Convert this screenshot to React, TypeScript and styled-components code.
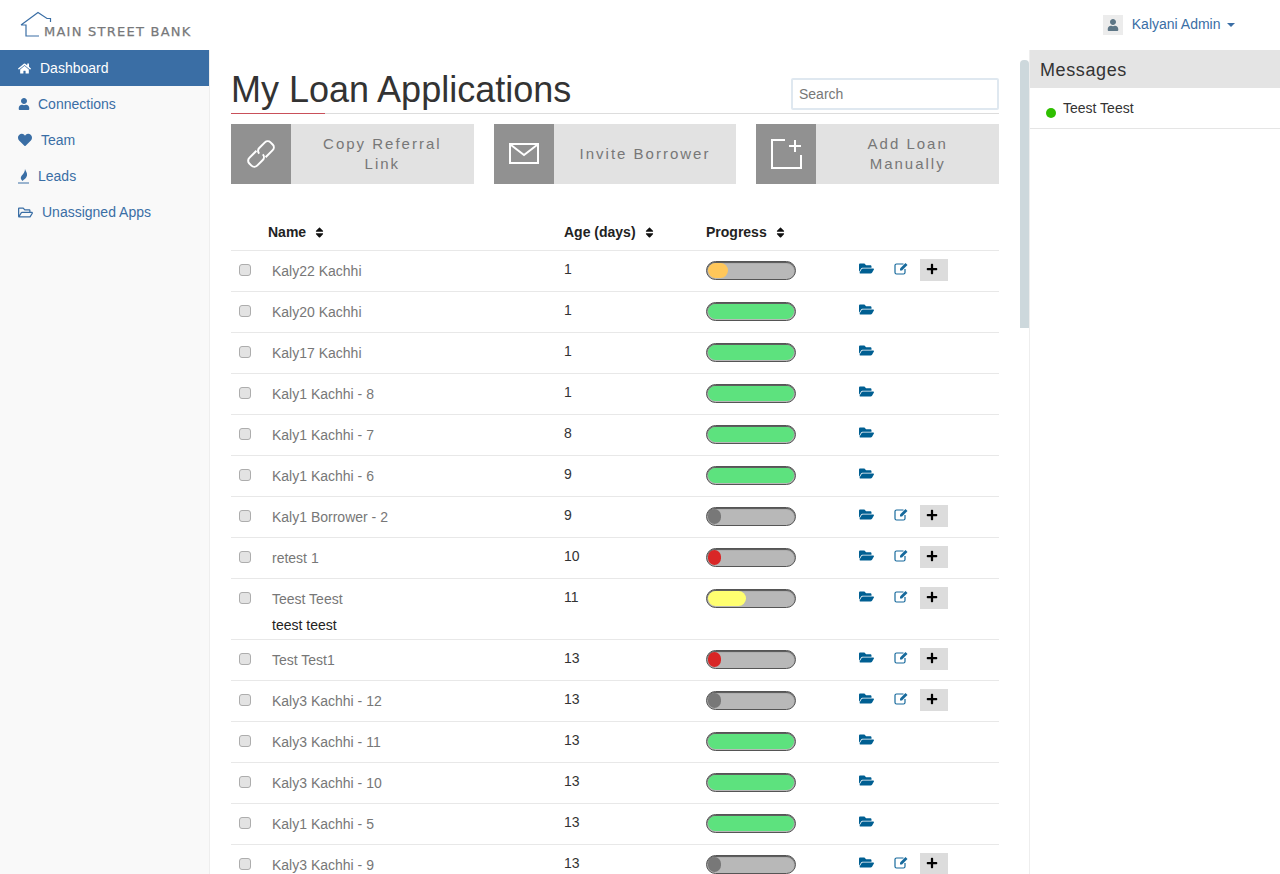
import React from "react";
import styled, { createGlobalStyle } from "styled-components";
import { FaHome, FaUser, FaHeart, FaRegFolderOpen, FaFolderOpen, FaPlus, FaSort } from "react-icons/fa";

const Global = createGlobalStyle`
  html, body { margin: 0; padding: 0; background: #fff; overflow: hidden; }
  body { font-family: "Liberation Sans", Arial, sans-serif; font-size: 14px; color: #333; }
  * { box-sizing: border-box; }
`;

const Page = styled.div`
  width: 1280px; height: 874px; overflow: hidden;
  display: flex; flex-direction: column;
`;
const TopBar = styled.header`
  height: 50px; flex: none; display: flex; align-items: flex-start; justify-content: space-between;
  padding-right: 45px;
`;
const Logo = styled.div`
  position: relative; width: 210px; height: 50px; padding: 22px 0 0 44px;
`;
const LogoMark = styled.svg`
  position: absolute; left: 19px; top: 11px;
`;
const LogoText = styled.span`
  font-family: "DejaVu Sans", sans-serif; font-size: 13px; font-weight: 400; letter-spacing: 1.25px;
  -webkit-text-stroke: 0.25px #77787a;
  line-height: 20px; color: #77787a; white-space: nowrap; display: block;
`;
const UserMenu = styled.div`
  display: flex; align-items: center; height: 20px; margin-top: 15px; color: #3a6ea5; font-size: 14px;
`;
const UserName = styled.span`
  margin-top: -2px;
`;
const Avatar = styled.span`
  width: 20px; height: 20px; background: #ececec; color: #5d7686; display: flex; align-items: center;
  justify-content: center; margin-right: 8.5px; font-size: 12px;
`;
const Caret = styled.span`
  width: 0; height: 0; margin-left: 6.5px; margin-top: -1px;
  border-left: 4px solid transparent; border-right: 4px solid transparent; border-top: 4px solid #3a6ea5;
`;
const Body = styled.div`
  flex: 1; display: flex; min-height: 0;
`;
const Sidebar = styled.nav`
  width: 210px; flex: none; background: #f9f9f9; border-right: 1px solid #eee;
`;
const NavItem = styled.a<{ $active?: boolean; $gap: number }>`
  display: flex; align-items: center; height: 36px; padding-left: 18px; gap: ${(p) => p.$gap}px;
  font-size: 14px; color: ${(p) => (p.$active ? "#fff" : "#3a6ea5")};
  background: ${(p) => (p.$active ? "#3a6ea5" : "transparent")};
  svg { flex: none; }
`;
const Main = styled.main`
  position: relative; flex: 1; min-width: 0; padding: 0 30px 0 21px;
`;
const ScrollThumb = styled.div`
  position: absolute; right: 0; top: 10px; width: 9px; height: 268px; background: #cdd8dc; border-radius: 4px 4px 0 0;
`;
const TitleRow = styled.div`
  display: flex; justify-content: space-between; align-items: flex-end; height: 64px; border-bottom: 1px solid #ddd; padding-bottom: 3px;
`;
const Title = styled.h1`
  position: relative; margin: 0; font-size: 36px; font-weight: 400; line-height: 40px; color: #333;
  &::after { content: ""; position: absolute; left: 0; bottom: -4px; width: 94px; height: 1px; background: #c9505a; }
`;
const Search = styled.input`
  width: 208px; height: 32px; border: 2px solid #dfe8f0; border-radius: 2px; padding: 0 6px; outline: none;
  font: 14px "Liberation Sans", Arial, sans-serif; color: #333;
  &::placeholder { color: #777; opacity: 1; }
`;
const Actions = styled.div`
  display: flex; gap: 20px; margin-top: 10px;
`;
const Action = styled.div`
  flex: 1; height: 60px; display: flex; background: #e2e2e2;
`;
const ActionIcon = styled.div`
  width: 60px; flex: none; background: #919191; display: flex; align-items: center; justify-content: center;
`;
const ActionLabel = styled.div`
  flex: 1; display: flex; align-items: center; justify-content: center; text-align: center; padding: 0 20px;
  font-size: 15px; line-height: 20px; letter-spacing: 2px; color: #777;
`;
const Grid = styled.div<{ $tall?: boolean }>`
  display: grid; grid-template-columns: 41px 292px 142px 153px 1fr;
  border-bottom: 1px solid #e8e8e8;
`;
const Head = styled(Grid)`
  margin-top: 30px; height: 37px; align-items: center; font-weight: 700; font-size: 14px; color: #222;
`;
const HeadCell = styled.div<{ $shift?: number }>`
  display: flex; align-items: center; gap: 7px; margin-left: ${(p) => p.$shift ?? 0}px;
  svg { font-size: 13px; color: #111; }
`;
const Row = styled(Grid)`
  height: ${(p) => (p.$tall ? 61 : 41)}px;
`;
const Check = styled.input.attrs({ type: "checkbox" })`
  appearance: none; width: 12px; height: 12px; margin: 13px 0 0 8px; border: 1px solid #adadad; border-radius: 3px; background: #e3e3e3;
`;
const NameCell = styled.div`
  padding-top: 10px; line-height: 20px; color: #777;
`;
const SubName = styled.div`
  color: #222; margin-top: 6px;
`;
const Age = styled.div`
  padding-top: 8px; line-height: 20px; color: #333;
`;
const BarCell = styled.div`
  padding-top: 10px;
`;
const Bar = styled.div`
  width: 90px; height: 19px; border-radius: 10px; background: #b8b8b8; border: 1px solid #555;
  box-shadow: inset 0 1px 1px #555; padding: 1px; overflow: hidden;
`;
const Fill = styled.div<{ $c: string }>`
  height: 100%; border-radius: 8px; background: ${(p) => p.$c};
`;
const Tools = styled.div`
  display: flex; align-items: flex-start; padding-top: 8px; height: 100%;
`;
const FolderBtn = styled.span`
  width: 35px; flex: none; color: #005f92; font-size: 15px; display: flex; align-items: center; height: 18px;
`;
const EditBtn = styled.span`
  width: 26px; flex: none; color: #16699c; display: flex; align-items: center; height: 18px;
`;
const PlusBtn = styled.span`
  width: 28px; height: 22px; background: #dcdcdc; color: #000; display: flex; align-items: center; justify-content: center;
  font-size: 12px; padding: 0 4px 2px 0;
`;
const Panel = styled.aside`
  width: 251px; flex: none; border-left: 1px solid #eee;
`;
const PanelHead = styled.div`
  height: 38px; background: #e4e4e4; display: flex; align-items: center; padding: 2px 0 0 10px;
  font-size: 18px; letter-spacing: 0.6px; color: #333;
`;
const Msg = styled.div`
  height: 41px; border-bottom: 1px solid #e5e5e5; display: flex; padding: 10px 0 0 16px; line-height: 20px; color: #333;
`;
const Dot = styled.span`
  width: 10px; height: 10px; border-radius: 50%; background: #2fbf00; margin: 10px 7px 0 0; flex: none;
`;

const ORANGE = "#ffc75a", GREEN = "#5de27e", GRAY = "#787878", RED = "#d92626", YEL = "#ffff70";
type R = { n: string; a: number; c: string; w: number; full?: boolean; sub?: string };
const rows: R[] = [
  { n: "Kaly22 Kachhi", a: 1, c: ORANGE, w: 20, full: true },
  { n: "Kaly20 Kachhi", a: 1, c: GREEN, w: 86 },
  { n: "Kaly17 Kachhi", a: 1, c: GREEN, w: 86 },
  { n: "Kaly1 Kachhi - 8", a: 1, c: GREEN, w: 86 },
  { n: "Kaly1 Kachhi - 7", a: 8, c: GREEN, w: 86 },
  { n: "Kaly1 Kachhi - 6", a: 9, c: GREEN, w: 86 },
  { n: "Kaly1 Borrower - 2", a: 9, c: GRAY, w: 13, full: true },
  { n: "retest 1", a: 10, c: RED, w: 13, full: true },
  { n: "Teest Teest", a: 11, c: YEL, w: 38, full: true, sub: "teest teest" },
  { n: "Test Test1", a: 13, c: RED, w: 13, full: true },
  { n: "Kaly3 Kachhi - 12", a: 13, c: GRAY, w: 13, full: true },
  { n: "Kaly3 Kachhi - 11", a: 13, c: GREEN, w: 86 },
  { n: "Kaly3 Kachhi - 10", a: 13, c: GREEN, w: 86 },
  { n: "Kaly1 Kachhi - 5", a: 13, c: GREEN, w: 86 },
  { n: "Kaly3 Kachhi - 9", a: 13, c: GRAY, w: 13, full: true },
];

const LinkIcon = () => (
  <svg width="32" height="32" viewBox="-16 -16 32 32" fill="none" stroke="#fff" strokeWidth="2">
    <g transform="rotate(-45)">
      <path d="M-1 -5.500H-11a4 4 0 0 0 -4 4v3a4 4 0 0 0 4 4H-3a4 4 0 0 0 4 -4" />
      <path d="M1 5.500H11a4 4 0 0 0 4 -4v-3a4 4 0 0 0 -4 -4H3a4 4 0 0 0 -4 4" />
    </g>
  </svg>
);
const MailIcon = () => (
  <svg width="30" height="22" viewBox="0 0 30 22" fill="none" stroke="#fff" strokeWidth="2">
    <rect x="1" y="1" width="28" height="19" />
    <path d="M2 2l13 10L28 2" />
  </svg>
);
const AddIcon = () => (
  <svg width="32" height="32" viewBox="0 0 32 32" fill="none" stroke="#fff" strokeWidth="2">
    <path d="M15 2H2v28h29V17" />
    <path d="M25 2v12M19 8h12" />
  </svg>
);
const EditIcon = () => (
  <svg width="15" height="14" viewBox="0 0 15 14">
    <path d="M9.500 3H2.500A1.500 1.500 0 0 0 1 4.500v7A1.500 1.500 0 0 0 2.500 13h7A1.500 1.500 0 0 0 11 11.500V8" fill="none" stroke="currentColor" strokeWidth="1.200" />
    <path d="M6 7.500L11.500 2l2 2L8 9.500H6z" fill="currentColor" />
  </svg>
);
const FlameIcon = () => (
  <svg width="11" height="15" viewBox="0 0 11 15" fill="currentColor">
    <path d="M7 0c.8 2.500 2.500 4 2 6.500C8.500 9 6 10.500 4.500 12 2.800 10.500 2 8.500 3.800 6.500 5.300 5 7 3 7 0z" />
    <path d="M0 13.500h11v1H0z" />
  </svg>
);

export default function App() {
  return (
    <Page>
      <Global />
      <TopBar>
        <Logo>
          <LogoMark width="36" height="28" viewBox="0 0 36 28" fill="none" stroke="#3a6ea5" strokeWidth="1.2">
            <path d="M2 14L19 1.500l9 6h3.500v3.500M2 14h5v11h13" />
          </LogoMark>
          <LogoText>MAIN STREET BANK</LogoText>
        </Logo>
        <UserMenu>
          <Avatar><FaUser /></Avatar>
          <UserName>Kalyani Admin</UserName>
          <Caret />
        </UserMenu>
      </TopBar>
      <Body>
        <Sidebar>
          <NavItem $active $gap={9}><FaHome size={13} />Dashboard</NavItem>
          <NavItem $gap={8}><FaUser size={12} />Connections</NavItem>
          <NavItem $gap={9}><FaHeart size={14} />Team</NavItem>
          <NavItem $gap={9}><FlameIcon />Leads</NavItem>
          <NavItem $gap={9}><FaRegFolderOpen size={15} />Unassigned Apps</NavItem>
        </Sidebar>
        <Main>
          <ScrollThumb />
          <TitleRow>
            <Title>My Loan Applications</Title>
            <Search placeholder="Search" />
          </TitleRow>
          <Actions>
            <Action><ActionIcon><LinkIcon /></ActionIcon><ActionLabel>Copy Referral Link</ActionLabel></Action>
            <Action><ActionIcon><MailIcon /></ActionIcon><ActionLabel>Invite Borrower</ActionLabel></Action>
            <Action><ActionIcon><AddIcon /></ActionIcon><ActionLabel>Add Loan Manually</ActionLabel></Action>
          </Actions>
          <Head>
            <div />
            <HeadCell $shift={-4}>Name <FaSort /></HeadCell>
            <HeadCell>Age (days) <FaSort /></HeadCell>
            <HeadCell>Progress <FaSort /></HeadCell>
            <div />
          </Head>
          {rows.map((r) => (
            <Row key={r.n} $tall={!!r.sub}>
              <div><Check /></div>
              <NameCell>{r.n}{r.sub && <SubName>{r.sub}</SubName>}</NameCell>
              <Age>{r.a}</Age>
              <BarCell><Bar><Fill $c={r.c} style={{ width: r.w }} /></Bar></BarCell>
              <Tools>
                <FolderBtn><FaFolderOpen /></FolderBtn>
                {r.full && <EditBtn><EditIcon /></EditBtn>}
                {r.full && <PlusBtn><FaPlus /></PlusBtn>}
              </Tools>
            </Row>
          ))}
        </Main>
        <Panel>
          <PanelHead>Messages</PanelHead>
          <Msg><Dot />Teest Teest</Msg>
        </Panel>
      </Body>
    </Page>
  );
}
